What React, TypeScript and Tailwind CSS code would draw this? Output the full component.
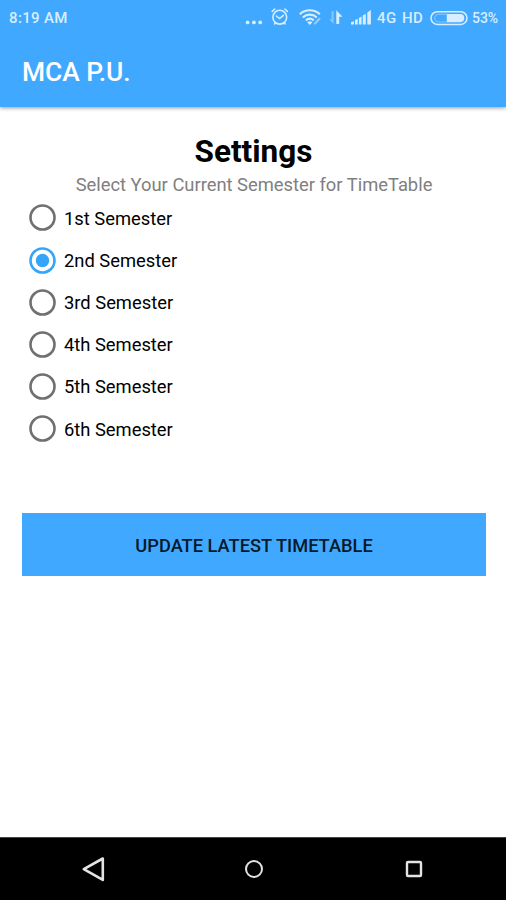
import React, { useState } from 'react';

const SEMESTERS = [
  '1st Semester',
  '2nd Semester',
  '3rd Semester',
  '4th Semester',
  '5th Semester',
  '6th Semester'
];

// Status bar: clock, signal icons, battery
const StatusBar: React.FC = () => (
  <div className="h-9 pl-[9px] pr-2 flex items-center justify-between text-[#d8eeff]">
    <span className="text-[15px] leading-none font-medium tracking-[0.35px]">8:19 AM</span>

    <div className="flex items-center">
      <svg width="128" height="24" viewBox="244 6 128 24" fill="none" stroke="currentColor" strokeLinecap="round">
        {/* More notifications */}
        <g fill="currentColor" stroke="none">
          <circle cx="247.6" cy="22.4" r="1.9" />
          <circle cx="253.9" cy="22.4" r="1.9" />
          <circle cx="260.2" cy="22.4" r="1.9" />
        </g>

        {/* Alarm */}
        <circle cx="279.8" cy="17.2" r="6.9" strokeWidth="1.6" />
        <path d="M276.3 16l3.3 2.6 3.8-3.2M272.2 11.4l2.6-2.4M287.4 11.4l-2.6-2.4M275.3 23l-.8 1M284.3 23l.8 1" strokeWidth="1.5" />

        {/* Wi-Fi */}
        <path d="M299.8 14.2c5.6-5.2 14.4-5.2 20 0M302.8 17.4c4-3.7 10-3.7 14 0M305.9 20.4c2.3-2 5.5-2 7.8 0" strokeWidth="2.1" strokeLinecap="butt" />
        <path d="M307.2 22.2q2.6-2 5.2 0l-2.6 2.7z" fill="currentColor" stroke="none" />
        <path d="M315 23.5l4.5-4.8" strokeWidth="2" opacity=".55" />

        {/* Data arrows */}
        <path d="M333.6 11v13l-4.4-4.8h2.4V11z" fill="currentColor" stroke="none" opacity=".45" />
        <path d="M336.3 24V10.3l6.2 6.4h-3.3V24z" fill="currentColor" stroke="none" />

        {/* Signal strength */}
        <path d="M351 24.5v-2.2l3-1v3.2zM355 24.5v-4.4l2.7-1.3v5.7zM358.9 24.5V18l2.7-1.6v8.1zM362.8 24.5v-9l3-1.8v10.8zM367.3 24.5V12.6l3.6-2.6v14.5z" fill="currentColor" stroke="none" />
      </svg>

      <span className="ml-[5px] w-[25px] text-[15px] leading-none font-medium tracking-[0.3px]">4G</span>
      <span className="w-[28px] text-[15px] leading-none font-medium tracking-[0.3px]">HD</span>

      <svg width="39" height="16" viewBox="0 0 39 16">
        <rect x="1" y="1.8" width="36" height="12.6" rx="6.3" fill="none" stroke="currentColor" strokeWidth="1.5" />
        <path d="M9 4.2h8v7.8H9C3.3 12 3.3 4.2 9 4.2z" fill="none" stroke="currentColor" strokeWidth="1" opacity=".45" />
        <path d="M17 4h13.2a4.1 4.1 0 0 1 0 8.2H17z" fill="currentColor" />
      </svg>

      <span className="ml-[3px] text-[14px] leading-none font-medium tracking-[-0.1px]">53%</span>
    </div>
  </div>
);

interface SemesterOptionProps {
  label: string;
  checked: boolean;
  onSelect: () => void;
}

const SemesterOption: React.FC<SemesterOptionProps> = ({ label, checked, onSelect }) => (
  <button
    role="radio"
    aria-checked={checked}
    onClick={onSelect}
    className="h-[42.2px] pl-[29px] flex items-center gap-2 cursor-pointer"
  >
    <svg
      width="27"
      height="27"
      viewBox="0 0 27 27"
      className={`flex-shrink-0 ${checked ? 'text-[#35a5fb]' : 'text-[#707070]'}`}
    >
      <circle cx="13.5" cy="13.5" r="12" fill="none" stroke="currentColor" strokeWidth="2.6" />
      {checked && <circle cx="13.5" cy="13.5" r="6.7" fill="currentColor" />}
    </svg>
    <span className="pt-[2px] text-[18.35px] leading-none text-black whitespace-nowrap">{label}</span>
  </button>
);

// Android back / home / recents
const NavigationBar: React.FC = () => (
  <div className="h-[63px] bg-black border-t border-[#444] flex items-center justify-between pl-[81px] pr-[83px] text-[#e4e4e4]">
    <svg width="24" height="26" viewBox="0 0 24 26" fill="none" stroke="currentColor" strokeWidth="2.6">
      <path d="M21.8 2.5v21.4L2.8 13.2z" strokeLinejoin="round" />
    </svg>
    <svg width="20" height="20" viewBox="0 0 20 20" fill="none" stroke="currentColor" strokeWidth="2">
      <circle cx="9" cy="10" r="8" />
    </svg>
    <svg width="18" height="18" viewBox="0 0 18 18" fill="none" stroke="currentColor" strokeWidth="2.4">
      <rect x="2" y="2" width="14" height="14" rx="1" />
    </svg>
  </div>
);

export default function App() {
  const [semester, setSemester] = useState('2nd Semester');

  return (
    <div className="w-full h-screen bg-white flex flex-col overflow-hidden font-[Roboto,sans-serif]">
      <header className="h-[107px] bg-[#40a9ff] flex-shrink-0 shadow-[0_1px_4px_rgba(0,0,0,0.4)]">
        <StatusBar />
        <div className="h-[71px] px-[22px] pt-[2px] flex items-center">
          <h1 className="text-[26.4px] leading-none font-medium text-white">MCA P.U.</h1>
        </div>
      </header>

      <main className="flex-1 flex flex-col">
        <h2 className="mt-[25px] pl-[1px] text-[31.5px] leading-[40px] font-bold text-black text-center">Settings</h2>
        <p className="pl-[2px] text-[18.35px] leading-[26px] text-[#808080] text-center">
          Select Your Current Semester for TimeTable
        </p>

        <div role="radiogroup" className="-mt-[1.2px] flex flex-col">
          {SEMESTERS.map((label) => (
            <SemesterOption
              key={label}
              label={label}
              checked={label === semester}
              onSelect={() => setSemester(label)}
            />
          ))}
        </div>

        <button className="mt-[63px] ml-[22px] mr-[20px] h-[63px] pt-[2px] bg-[#40a9ff] text-[18.25px] font-medium text-[#061a2b] cursor-pointer">
          UPDATE LATEST TIMETABLE
        </button>
      </main>

      <NavigationBar />
    </div>
  );
}
